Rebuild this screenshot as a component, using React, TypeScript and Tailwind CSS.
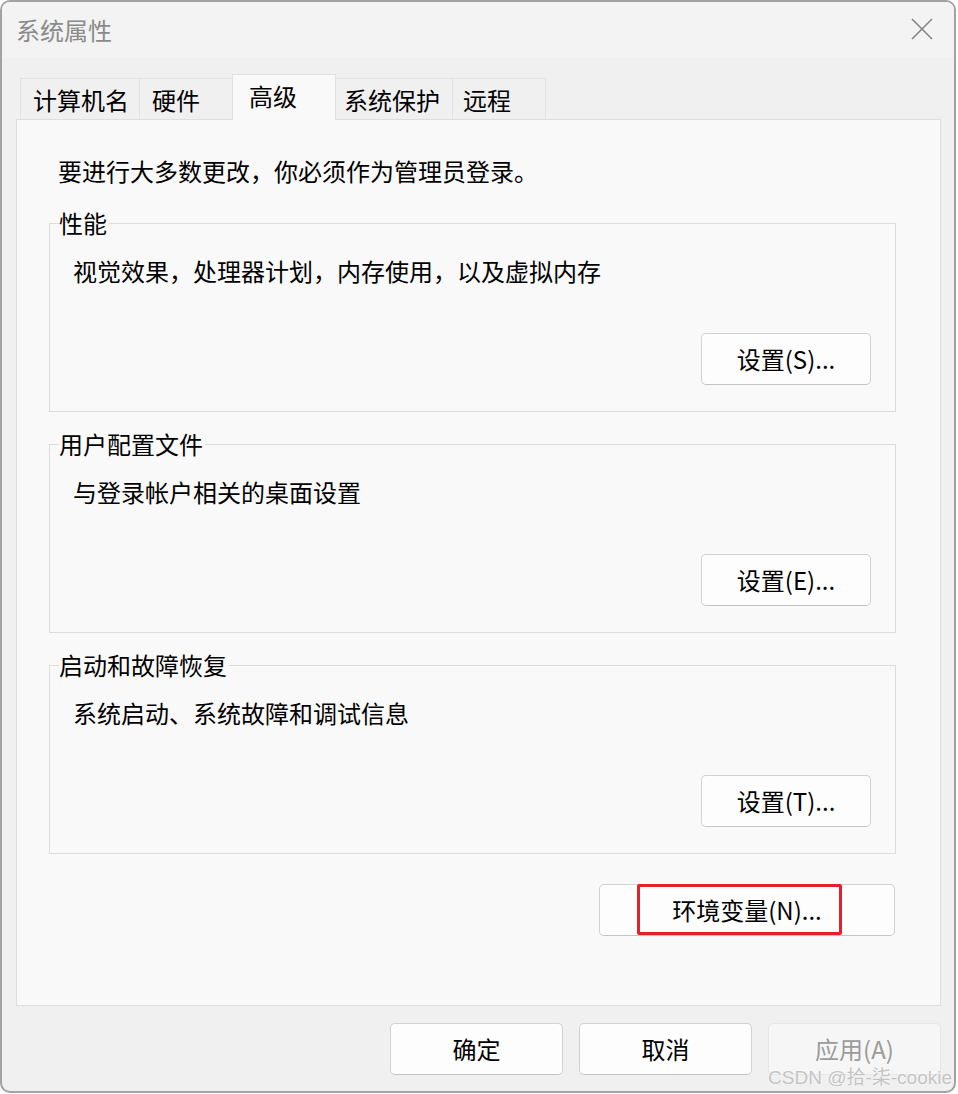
import { FC, ReactNode } from "react";

const font = "font-['Microsoft_YaHei','Noto_Sans_CJK_SC',sans-serif]";

type Tab = { label: string; width: string; pad: string; active?: boolean };

const tabs: Tab[] = [
    { label: "计算机名", width: "w-[120px]", pad: "pl-[12px]" },
    { label: "硬件", width: "w-[94px]", pad: "pl-[12px]" },
    { label: "高级", width: "w-[104px]", pad: "pl-[16px]", active: true },
    { label: "系统保护", width: "w-[118px]", pad: "pl-[8px]" },
    { label: "远程", width: "w-[94px]", pad: "pl-[10px]" },
];

const WinButton: FC<{ label: string; className?: string; disabled?: boolean }> = ({
    label,
    className,
    disabled,
}): ReactNode => (
    <button
        className={
            "h-[52px] rounded-[5px] border text-[24px] leading-none " +
            (disabled
                ? "bg-[#f6f6f6] border-[#e6e6e6] text-[#9b9b9b] "
                : "bg-[#fdfdfd] border-[#d2d2d2] border-b-[#c4c4c4] text-black ") +
            (className ?? "")
        }
    >
        {label}
    </button>
);

const GroupBox: FC<{ title: string; desc: string; button: string; className?: string }> = ({
    title,
    desc,
    button,
    className,
}): ReactNode => (
    <fieldset className={"w-[847px] h-[204px] border border-[#dcdcdc] " + (className ?? "")}>
        <legend className="ml-[9px] pr-[2px] text-[24px] leading-[30px] text-black">{title}</legend>
        <div className="flex flex-col pt-[18px] pl-[23px] pr-[24px]">
            <p className="text-[24px] leading-[30px] text-black">{desc}</p>
            <WinButton label={button} className="self-end mt-[47px] w-[170px]" />
        </div>
    </fieldset>
);

const App: FC = (): ReactNode => {
    return (
        <div className={"min-h-screen bg-white " + font}>
            <div className="relative w-[956px] h-[1093px] border-2 border-[#a2a2a2] rounded-[10px] bg-[#f0f0f0] overflow-hidden flex flex-col">
                {/* Title bar */}
                <div className="h-[56px] bg-[#f3f3f3] flex items-center justify-between pl-[14px] pr-[21px]">
                    <span className="text-[24px] text-[#8a8a8a] leading-none">系统属性</span>
                    <svg width="22" height="22" viewBox="0 0 22 22" className="mb-[2px]">
                        <path d="M1 1 L21 21 M21 1 L1 21" stroke="#858585" strokeWidth="1.6" fill="none" />
                    </svg>
                </div>

                {/* Body */}
                <div className="flex flex-col pl-[14px]">
                    {/* Tabs */}
                    <div className="flex items-end h-[45px] mt-[16px] ml-[4px]">
                        {tabs.map((t, i) => (
                            <div
                                key={t.label}
                                className={
                                    t.width +
                                    " " +
                                    t.pad +
                                    " flex items-center border border-b-0 border-[#e2e2e2] text-[24px] text-black " +
                                    (i > 0 ? "-ml-px " : "") +
                                    (t.active
                                        ? "h-[46px] -mb-px bg-[#f9f9f9] relative z-10 pb-[3px]"
                                        : "h-[41px] bg-[#f0f0f0] pt-[2px]")
                                }
                            >
                                {t.label}
                            </div>
                        ))}
                    </div>

                    {/* Tab panel */}
                    <div className="w-[925px] h-[887px] border border-[#dedede] bg-[#f9f9f9] flex flex-col pt-[36px]">
                        <p className="pl-[41px] text-[24px] leading-[30px] text-black">
                            要进行大多数更改，你必须作为管理员登录。
                        </p>

                        <div className="flex flex-col pl-[32px] mt-[22px] gap-[17px]">
                            <GroupBox title="性能" desc="视觉效果，处理器计划，内存使用，以及虚拟内存" button="设置(S)..." />
                            <GroupBox title="用户配置文件" desc="与登录帐户相关的桌面设置" button="设置(E)..." />
                            <GroupBox title="启动和故障恢复" desc="系统启动、系统故障和调试信息" button="设置(T)..." />
                        </div>

                        <div className="relative self-start ml-[582px] mt-[30px]">
                            <WinButton label="环境变量(N)..." className="w-[296px]" />
                            <div className="absolute left-[38px] top-[0px] w-[205px] h-[51px] border-[3px] border-[#e5202b] rounded-[2px] pointer-events-none" />
                        </div>
                    </div>

                    {/* Dialog buttons */}
                    <div className="flex gap-[16px] mt-[17px] ml-[374px]">
                        <WinButton label="确定" className="w-[173px]" />
                        <WinButton label="取消" className="w-[173px]" />
                        <WinButton label="应用(A)" className="w-[173px]" disabled />
                    </div>
                </div>

                {/* Watermark */}
                <span className="absolute right-[2px] bottom-[4px] text-[19px] leading-none text-[#c4c4c4] font-['Liberation_Sans','Noto_Sans_CJK_SC',sans-serif] [text-shadow:0_0_2px_#ffffff]">
                    CSDN @拾-柒-cookie
                </span>
            </div>
        </div>
    );
};

export default App;
